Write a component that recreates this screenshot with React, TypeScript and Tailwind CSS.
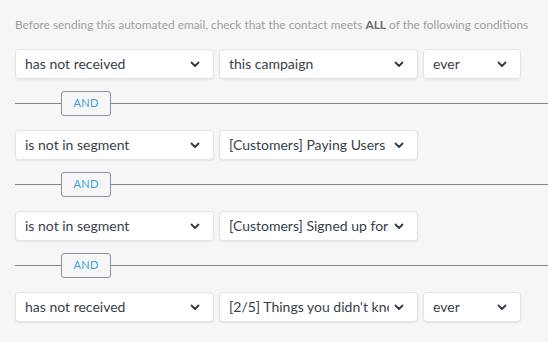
import React from "react";

function Chevron() {
  return (
    <svg width="10" height="7" viewBox="0 0 10 7" className="shrink-0">
      <path d="M1.5 1.5 L5 5 L8.5 1.5" fill="none" stroke="#2f3a44" strokeWidth="1.8" strokeLinecap="round" strokeLinejoin="round" />
    </svg>
  );
}

function Select({ label, w }: { label: string; w: string }) {
  return (
    <div className={`${w} h-[30px] shrink-0 bg-white border border-[#e4e4e4] rounded-[4px] shadow-[0_1px_2px_rgba(0,0,0,0.07)] flex items-center pl-[9px] pr-[13px]`}>
      <span className="flex-1 min-w-0 overflow-hidden whitespace-nowrap text-[14px] text-[#38414a] leading-[18px] mr-[5px]">{label}</span>
      <Chevron />
    </div>
  );
}

function And() {
  return (
    <div className="flex items-center h-[25px] mt-[12px] mb-[14px]">
      <div className="w-[46px] h-px bg-[#7b8896]" />
      <div className="w-[50px] h-[25px] border border-[#8593a2] rounded-[3px] flex items-center justify-center text-[11px] text-[#3ba2d9] tracking-[0.3px]">
        AND
      </div>
      <div className="flex-1 h-px bg-[#7b8896]" />
    </div>
  );
}

export default function App() {
  return (
    <div className="w-[548px] h-[342px] bg-[#f6f6f6] pl-[15px] pt-[18px] overflow-hidden font-['Lato',sans-serif]">
      <p className="text-[11.9px] leading-[14px] text-[#a0a0a0] whitespace-nowrap">
        Before sending this automated email, check that the contact meets <b className="text-[#6b6b6b] font-bold">ALL</b> of the following conditions
      </p>
      <div className="mt-[17px] flex gap-[5px]">
        <Select label="has not received" w="w-[199px]" />
        <Select label="this campaign" w="w-[199px]" />
        <Select label="ever" w="w-[98px]" />
      </div>
      <And />
      <div className="flex gap-[5px]">
        <Select label="is not in segment" w="w-[199px]" />
        <Select label="[Customers] Paying Users" w="w-[199px]" />
      </div>
      <And />
      <div className="flex gap-[5px]">
        <Select label="is not in segment" w="w-[199px]" />
        <Select label="[Customers] Signed up for" w="w-[199px]" />
      </div>
      <And />
      <div className="flex gap-[5px]">
        <Select label="has not received" w="w-[199px]" />
        <Select label="[2/5] Things you didn't know" w="w-[199px]" />
        <Select label="ever" w="w-[98px]" />
      </div>
    </div>
  );
}
